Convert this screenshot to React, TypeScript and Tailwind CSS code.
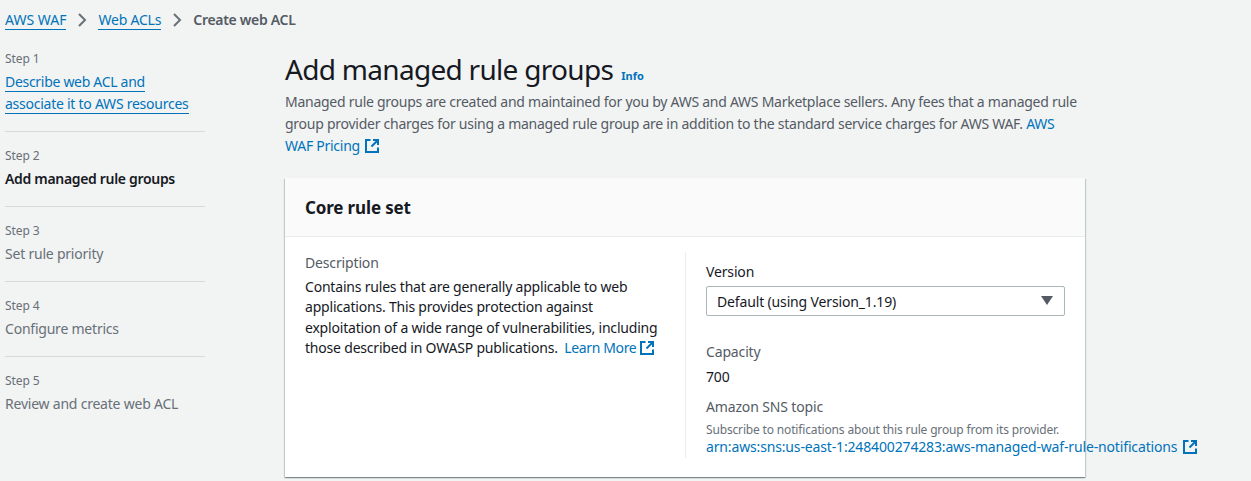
const ExternalIcon = ({ className }: { className: string }) => (
  <svg viewBox="0 0 14 14" fill="none" stroke="currentColor" strokeWidth="2" className={className}>
    <path d="M5.5 1H1v12h12V8.5" />
    <path d="M8 1h5v5" />
    <path d="M13 1L6.5 7.5" />
  </svg>
);

const Chevron = () => (
  <svg viewBox="0 0 16 16" fill="none" stroke="#687078" strokeWidth="2" className="w-4 h-4 mx-[8px]">
    <path d="M5 2l6 6-6 6" />
  </svg>
);

const steps = [
  { step: "Step 3", label: "Set rule priority" },
  { step: "Step 4", label: "Configure metrics" },
  { step: "Step 5", label: "Review and create web ACL" },
];

const link = "text-[#0073bb]";

export default function App() {
  return (
    <div className="w-[1251px] h-[481px] overflow-hidden bg-[#f2f3f3] text-[14px] text-[#16191f] font-['Noto_Sans',sans-serif] tracking-[-0.15px]">
      <div className="flex items-center pl-[5px] pt-[10px] h-[30px] leading-[20px] tracking-[0px]">
        <span className="text-[#0073bb] border-b border-[#0073bb] leading-[18px]">AWS WAF</span>
        <Chevron />
        <span className="text-[#0073bb] border-b border-[#0073bb] leading-[18px] tracking-[-0.2px]">Web ACLs</span>
        <Chevron />
        <span className="font-semibold text-[#545b64] tracking-[-0.3px]">Create web ACL</span>
      </div>

      <div className="flex">
        <div className="w-[200px] ml-[5px] mr-[80px] shrink-0 pt-[21px] tracking-[-0.22px]">
          <div className="text-[12px] leading-[16px] text-[#687078] tracking-[-0.1px]">Step 1</div>
          <div className="mt-[4px] leading-[22px] text-[#0073bb] pb-[16px] border-b border-[#d5dbdb]">
            <span className="border-b border-[#0073bb] tracking-[-0.3px]">Describe web ACL and</span>
            <br />
            <span className="border-b border-[#0073bb] tracking-[-0.25px]">associate it to AWS resources</span>
          </div>
          <div className="pt-[16px] pb-[16px] border-b border-[#d5dbdb]">
            <div className="text-[12px] leading-[16px] text-[#687078] tracking-[-0.1px]">Step 2</div>
            <div className="mt-[4px] leading-[22px] font-semibold tracking-[-0.32px]">Add managed rule groups</div>
          </div>
          {steps.map((s, i) => (
            <div key={s.step} className={i < 2 ? "pt-[16px] pb-[16px] border-b border-[#d5dbdb]" : "pt-[16px]"}>
              <div className="text-[12px] leading-[16px] text-[#687078] tracking-[-0.1px]">{s.step}</div>
              <div className="mt-[4px] leading-[22px] text-[#687078]">{s.label}</div>
            </div>
          ))}
        </div>

        <div className="w-[800px] shrink-0">
          <div className="flex items-baseline pt-[19px]">
            <h1 className="text-[28px] leading-[40px] tracking-[-0.7px]">Add managed rule groups</h1>
            <span className={`${link} text-[11px] font-bold ml-[8px] tracking-normal`}>Info</span>
          </div>
          <p className="leading-[22px] text-[#545b64] mt-[2px] w-[800px] tracking-[-0.26px]">
            Managed rule groups are created and maintained for you by AWS and AWS Marketplace sellers. Any fees that a managed rule group provider charges for using a managed rule group are in addition to the standard service charges for AWS WAF.{" "}
            <span className={link}>
              AWS
              <br />
              WAF Pricing
              <ExternalIcon className="inline-block w-[14px] h-[14px] ml-[5px] -mt-[2px]" />
            </span>
          </p>

          <div className="mt-[21px] bg-white shadow-[0_1px_1px_0_rgba(0,28,36,0.3),1px_1px_1px_0_rgba(0,28,36,0.15),-1px_1px_1px_0_rgba(0,28,36,0.15)]">
            <div className="h-[59px] flex items-center px-[20px] pt-[2px] bg-[#fafafa] border-b border-[#eaeded]">
              <h2 className="text-[17px] font-bold">Core rule set</h2>
            </div>
            <div className="flex h-[240px] pt-[15px]">
              <div className="w-[400px] pl-[20px] pr-[15px]">
                <div className="leading-[22px] text-[#545b64]">Description</div>
                <p className="leading-[20.4px] mt-[3px] tracking-[-0.2px]">
                  Contains rules that are generally applicable to web applications. This provides protection against exploitation of a wide range of vulnerabilities, including those described in OWASP publications.{" "}
                  <span className={`${link} ml-[3px] tracking-[-0.35px]`}>
                    Learn More
                    <ExternalIcon className="inline-block w-[14px] h-[14px] ml-[4px] -mt-[2px]" />
                  </span>
                </p>
              </div>
              <div className="w-[400px] pl-[20px] pr-[20px] border-l border-[#eaeded] mb-[19px]">
                <div className="leading-[22px] mt-[9px]">Version</div>
                <div className="mt-[3px] h-[30px] w-[359px] bg-white border border-[#aab7b8] rounded-[2px] flex items-center justify-between pl-[10px] pr-[11px]">
                  <span>Default (using Version_1.19)</span>
                  <svg viewBox="0 0 12 10" className="w-[12px] h-[10px] fill-[#545b64]">
                    <path d="M0 0h12L6 9z" />
                  </svg>
                </div>
                <div className="mt-[25px] leading-[22px] text-[#545b64]">Capacity</div>
                <div className="mt-[3px] leading-[22px]">700</div>
                <div className="mt-[8px] leading-[22px] text-[#545b64]">Amazon SNS topic</div>
                <div className="text-[12px] leading-[16px] text-[#687078] mt-[4px] whitespace-nowrap tracking-[-0.16px]">Subscribe to notifications about this rule group from its provider.</div>
                <div className={`${link} leading-[18px] whitespace-nowrap`}>
                  arn:aws:sns:us-east-1:248400274283:aws-managed-waf-rule-notifications
                  <ExternalIcon className="inline-block w-[14px] h-[14px] ml-[6px] -mt-[2px]" />
                </div>
              </div>
            </div>
          </div>
        </div>
      </div>
    </div>
  );
}
